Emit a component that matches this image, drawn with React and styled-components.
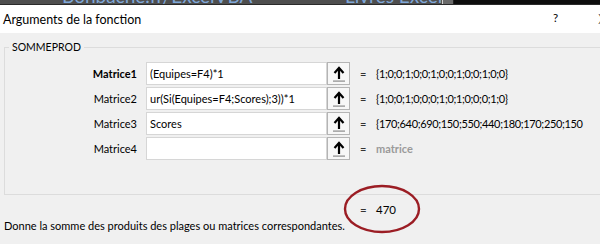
import React from 'react';
import styled, { createGlobalStyle } from 'styled-components';

const GlobalStyle = createGlobalStyle`
  html, body {
    margin: 0;
    padding: 0;
    background: #f0f0f0;
    overflow: hidden;
  }
  body {
    font-family: Lato, "Noto Sans", sans-serif;
    color: #000;
  }
`;

const ROWS = [
  { name: 'Matrice1', value: '(Equipes=F4)*1', result: '{1;0;0;1;0;0;1;0;0;1;0;0;1;0;0}', bold: true },
  { name: 'Matrice2', value: 'ur(Si(Equipes=F4;Scores);3))*1', result: '{1;0;0;1;0;0;0;1;0;1;0;0;0;1;0}' },
  { name: 'Matrice3', value: 'Scores', result: '{170;640;690;150;550;440;180;170;250;150' },
  { name: 'Matrice4', value: '', result: 'matrice', muted: true },
];

function CollapseIcon() {
  return (
    <svg width="16" height="18" viewBox="0 0 16 18">
      <path d="M8 3.5 V14" stroke="#000" strokeWidth="2.2" />
      <path d="M3.5 8 L8 3 L12.5 8" stroke="#000" strokeWidth="2.2" fill="none" />
      <rect x="2" y="15.5" width="12" height="1.2" fill="#8a8a8a" />
    </svg>
  );
}

function ArgRow({ name, value, result, bold, muted }) {
  return (
    <>
      <Label $bold={bold}>{name}</Label>
      <Field>
        <Input>{value}</Input>
        <RefButton type="button">
          <CollapseIcon />
        </RefButton>
      </Field>
      <Equals>=</Equals>
      <Result $muted={muted}>{result}</Result>
    </>
  );
}

export default function App() {
  return (
    <>
      <GlobalStyle />
      <Screen>
        <Strip>
          <StripText $width={342}>
            <StripLine $indent={62}>Bonbache.fr/ExcelVBA</StripLine>
          </StripText>
          <StripText $width={100}>
            <StripLine $indent={3}>Livres Excel</StripLine>
          </StripText>
          <StripTab />
          <StripDark />
        </Strip>
        <TitleBar>
          <Title>Arguments de la fonction</Title>
          <TitleButtons>
            <span>?</span>
            <Close>X</Close>
          </TitleButtons>
        </TitleBar>
        <Body>
          <Group>
            <Legend>SOMMEPROD</Legend>
            <ArgGrid>
              {ROWS.map((r) => (
                <ArgRow key={r.name} {...r} />
              ))}
            </ArgGrid>
          </Group>
          <Footer>
            <Total>
              <Equals>=</Equals>
              <span>470</span>
              <Circle viewBox="0 0 78 50">
                <ellipse cx="39" cy="25" rx="37" ry="23" fill="none" stroke="#9b1d24" strokeWidth="2.4" />
              </Circle>
            </Total>
            <Description>Donne la somme des produits des plages ou matrices correspondantes.</Description>
          </Footer>
        </Body>
      </Screen>
    </>
  );
}

const Screen = styled.div`
  width: 640px;
  height: 244px;
  display: flex;
  flex-direction: column;
`;

const Strip = styled.div`
  height: 5px;
  flex: 0 0 5px;
  background: #4e4e4e;
  display: flex;
  border-bottom: 1px solid #2a2a2a;
  box-sizing: border-box;
`;

const StripText = styled.div`
  width: ${({ $width }) => $width}px;
  height: 4px;
  overflow: hidden;
`;

const StripLine = styled.div`
  margin-top: -14px;
  padding-left: ${({ $indent }) => $indent}px;
  font-size: 19px;
  line-height: 20px;
  color: #7fa7d8;
  white-space: nowrap;
`;

const StripTab = styled.div`
  width: 10px;
  height: 4px;
  background: #6a6a6a;
  border-left: 1px solid #d0d0d0;
  border-right: 1px solid #222;
`;

const StripDark = styled.div`
  flex: 1;
  height: 4px;
  background: #0d0d0d;
`;

const TitleBar = styled.div`
  height: 28px;
  flex: 0 0 28px;
  background: #fff;
  display: flex;
  align-items: center;
  justify-content: space-between;
  padding: 0 0 0 3px;
  font-size: 12.5px;
`;

const Title = styled.div`
  color: #000;
`;

const TitleButtons = styled.div`
  display: flex;
  gap: 40px;
  width: 87px;
  font-size: 11.5px;
`;

const Close = styled.span`
  font-size: 13px;
  font-weight: 300;
`;

const Body = styled.div`
  flex: 1;
  background: #f0f0f0;
  padding: 8px 0 0 4px;
  font-size: 11px;
`;

const Group = styled.fieldset`
  margin: 0;
  padding: 8px 0 34px 0;
  border: 1px solid #dcdcdc;
  border-right: none;
  min-width: 0;
`;

const Legend = styled.legend`
  margin-left: 4px;
  padding: 0 3px;
  font-size: 10.5px;
  line-height: 13px;
`;

const ArgGrid = styled.div`
  display: grid;
  grid-template-columns: 141px 214px 16px auto;
  row-gap: 2px;
  align-items: center;
`;

const Label = styled.div`
  text-align: right;
  padding-right: 9px;
  font-weight: ${({ $bold }) => ($bold ? 700 : 400)};
`;

const Field = styled.div`
  display: flex;
  height: 23px;
`;

const Input = styled.div`
  width: 181px;
  box-sizing: border-box;
  background: #fff;
  border: 1px solid #d6d6d6;
  padding: 0 3px;
  line-height: 21px;
  white-space: nowrap;
  overflow: hidden;
`;

const RefButton = styled.button`
  width: 23px;
  height: 23px;
  padding: 0;
  border: 1px solid #b4b4b4;
  background: #f7f7f7;
  display: flex;
  align-items: center;
  justify-content: center;
`;

const Equals = styled.span`
  display: inline-block;
  width: 16px;
  color: #333;
`;

const Result = styled.div`
  color: ${({ $muted }) => ($muted ? '#9a9a9a' : '#000')};
  font-weight: ${({ $muted }) => ($muted ? 700 : 400)};
  letter-spacing: ${({ $muted }) => ($muted ? '0' : '-0.35px')};
  white-space: nowrap;
`;

const Footer = styled.div`
  position: relative;
  height: 50px;
`;

const Total = styled.div`
  position: absolute;
  left: 356px;
  top: 5px;
  display: flex;
  align-items: center;
  height: 18px;
  font-size: 11.5px;
`;

const Circle = styled.svg`
  position: absolute;
  left: -17px;
  top: -16px;
  width: 78px;
  height: 50px;
`;

const Description = styled.div`
  position: absolute;
  left: 0;
  top: 24px;
`;
